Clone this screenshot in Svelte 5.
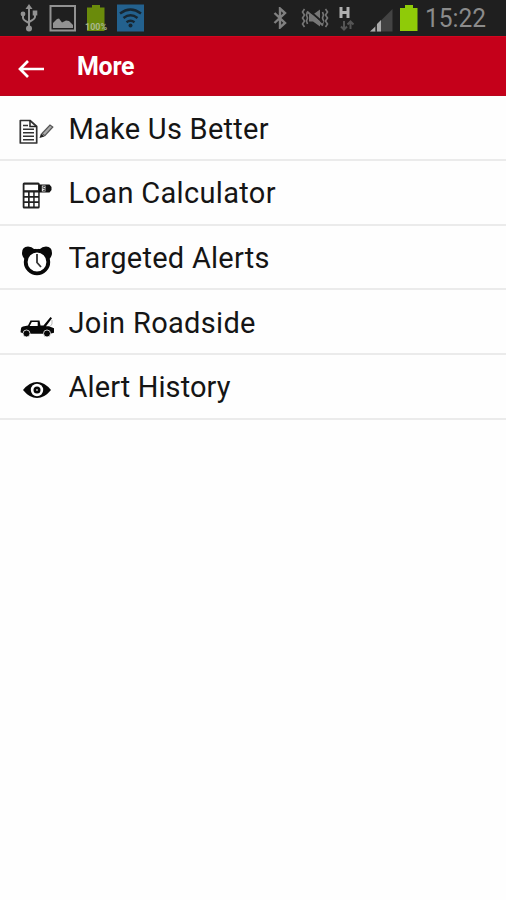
<script lang="ts">
    type MenuItem = {
        label: string;
        icon: string;
        width: number;
    };

    const time = "15:22";

    const items: MenuItem[] = [
        { label: "Make Us Better", icon: "feedback", width: 200 },
        { label: "Loan Calculator", icon: "calculator", width: 207 },
        { label: "Targeted Alerts", icon: "alarm", width: 201 },
        { label: "Join Roadside", icon: "truck", width: 187 },
        { label: "Alert History", icon: "eye", width: 162 }
    ];
</script>

<div class="screen">
    <div class="status-bar">
        <div class="status-group">
            <svg class="usb" width="18" height="28" viewBox="0 0 18 28">
                <g fill="none" stroke="#929292" stroke-width="2">
                    <path d="M9 4v20M3 10v4q0 2 6 5M15 9v4q0 2-6 5" />
                </g>
                <path d="M9 0l3.5 5h-7z" fill="#929292" />
                <circle cx="9" cy="24.5" r="3" fill="#929292" />
                <circle cx="3" cy="10" r="2.4" fill="#929292" />
                <path d="M12.7 6.5h4.6v5h-4.6z" fill="#929292" />
            </svg>
            <svg class="picture" width="27" height="28" viewBox="0 0 27 28">
                <path d="M1.500 2h24.500v24.500H1.500z" fill="none" stroke="#929292" stroke-width="2" />
                <path d="M4 24v-5l4-4 2-0.500 3 4 4-2 3 0.500 4 4v3z" fill="#929292" />
            </svg>
            <svg class="charge" width="24" height="28" viewBox="0 0 24 28">
                <path d="M8 1h8v2.500h4.500V27H3V3.500h5z" fill="#6a8b0b" />
                <text x="12" y="26" text-anchor="middle" textLength="22" lengthAdjust="spacingAndGlyphs">100%</text>
            </svg>
            <svg class="wifi" width="27" height="28" viewBox="0 0 27 28">
                <path d="M0 0.500h27v27H0z" fill="#23618e" />
                <g fill="none" stroke="#172733" stroke-width="2.500">
                    <path d="M3 9.500q10.500-8 21 0M6.500 14q7-5.500 14 0M9.500 18.300q4-3 8 0" />
                </g>
                <circle cx="13.500" cy="21.500" r="2" fill="#172733" />
            </svg>
        </div>
        <div class="status-group">
            <svg class="bluetooth" width="14" height="22" viewBox="0 0 14 22">
                <path d="M1.500 6l10.500 10-5 4.500v-19L12 6 1.500 16" fill="none" stroke="#808080" stroke-width="2.400" />
            </svg>
            <svg class="muted" width="28" height="20" viewBox="0 0 28 20">
                <g fill="none" stroke="#777" stroke-width="1.600">
                    <path d="M3.500 1l-2 3 2 3-2 3 2 3-2 3 2 3M6.500 4l-1 3 1 3-1 3 1 3M24.500 1l2 3-2 3 2 3-2 3 2 3-2 3M21.500 4l1 3-1 3 1 3-1 3" />
                </g>
                <path d="M8 6.500h4l7-5v17l-7-5H8z" fill="#777" />
                <path d="M7 1.500l15 13" stroke="#1f1f1f" stroke-width="2" />
                <path d="M6 3.500l16 14" stroke="#777" stroke-width="2" />
            </svg>
            <svg class="network" width="16" height="25" viewBox="0 0 16 25">
                <path d="M2 1v11M9 1v11M2 6.500H9" fill="none" stroke="#b0b0b0" stroke-width="3" />
                <path d="M5 15v8M2 20.500l3 3 3-3M11.500 23v-7M8.500 18.500l3-3 3 3" fill="none" stroke="#555" stroke-width="2" />
            </svg>
            <svg class="signal" width="24" height="23" viewBox="0 0 24 23">
                <path d="M22.500 0v22.500H0z" fill="#434343" />
                <path d="M0 22.500l5.500-5v5zM7 22.500v-7.500l4-4v11.500z" fill="#aaa" />
                <path d="M5.500 17.500l1.500-1.500v6.500H5.500z" fill="#2c2c2c" />
            </svg>
            <svg class="battery" width="18" height="26" viewBox="0 0 18 26">
                <path d="M5 0h8v3h4.500v23H0V3h5z" fill="#8fcb08" />
            </svg>
            <svg class="clock" width="66" height="36" viewBox="0 0 66 36">
                <text x="0" y="26.500" textLength="61" lengthAdjust="spacingAndGlyphs">{time}</text>
            </svg>
        </div>
    </div>

    <header class="app-bar">
        <button class="back" aria-label="Back">
            <svg width="28" height="20" viewBox="0 0 28 20">
                <path d="M26 10H2.500M10 2L2 10l8 8" fill="none" stroke="#fff" stroke-width="2.700" />
            </svg>
        </button>
        <h1 class="title">More</h1>
    </header>

    <ul class="menu">
        {#each items as item}
            <li class="menu-item">
                <svg class="menu-icon" width="38" height="40" viewBox="0 0 38 40">
                    {#if item.icon === "feedback"}
                        <path d="M2.300 12.500H12l6.700 6v16.500H2.300z" fill="#fff" stroke="#333" stroke-width="1.700" stroke-linejoin="round" />
                        <path d="M12 12.500V18.500h6.500" fill="none" stroke="#222" stroke-width="1.500" />
                        <path d="M5 17.500h5M5 21.200h11M5 24.700h11M5 28.200h11M5 31.700h11" stroke="#333" stroke-width="1.500" />
                        <path d="M24 25.500l8-8.500 2.800 2-8 8.700z" fill="#aaa" stroke="#555" stroke-width="1.200" />
                        <path d="M23 25.500l3.500 3-5 1.500z" fill="#222" />
                    {:else if item.icon === "calculator"}
                        <rect x="4.700" y="10.500" width="17" height="26" rx="1.500" fill="#222" />
                        <path d="M6.500 12.700h13.500v5.500H6.500z" fill="#fff" />
                        <path d="M6.500 20.500h3.500v3.500H6.500zM11.700 20.500h3.500v3.500h-3.500zM16.700 20.500h3.500v3.500h-3.500zM6.500 25.700h3.500v3.500H6.500zM11.700 25.700h3.500v3.500h-3.500zM16.700 25.700h3.500v3.500h-3.500zM6.500 31h3.500v3.500H6.500zM11.700 31h3.500v3.500h-3.500zM16.700 31h3.500v3.500h-3.500z" fill="#fff" />
                        <path d="M21 12.500h10.500l2 2.500v3l-2 2.500H21z" fill="#111" />
                        <path d="M23.800 13.500h3.700v6h-3.700z" fill="#ddd" />
                        <path d="M27 14.500h-2v2h2v2h-2" fill="none" stroke="#555" stroke-width="1" />
                    {:else if item.icon === "alarm"}
                        <path d="M4 16q0-6.500 6-6.500 4 0 6 2.500h6q2-2.500 6-2.500 6 0 6 6.500 0 3-2 5.500H6Q4 19 4 16z" fill="#080808" />
                        <circle cx="19" cy="25" r="11.300" fill="#fff" stroke="#080808" stroke-width="3.800" />
                        <path d="M15.500 10l3.500 2.200 3.500-2.200z" fill="#fefefe" />
                        <path d="M19 17v8.500l4 4.500" fill="none" stroke="#333" stroke-width="1.800" />
                    {:else if item.icon === "truck"}
                        <path d="M3 26.500q0-1.500 2-2l5-1 2.500-5h9l1 5h3l7-8.500 1.500 1.200-6 8H31l5 2v4.500l-4 1H6l-3.500-1.500z" fill="#080808" />
                        <path d="M13.800 19.900h5.900v4h-8z" fill="#fff" />
                        <path d="M34 18v4l-1.500 2" fill="none" stroke="#bbb" stroke-width="1" />
                        <circle cx="8.500" cy="31.500" r="3.500" fill="#080808" stroke="#fff" stroke-width="0.800" />
                        <circle cx="29" cy="31.500" r="3.500" fill="#080808" stroke="#fff" stroke-width="0.800" />
                    {:else}
                        <path d="M5 24q6.500-8 14-8t14 8q-6.500 8-14 8T5 24z" fill="#080808" />
                        <circle cx="19" cy="24" r="6.200" fill="#fff" />
                        <circle cx="19" cy="24" r="3.500" fill="#080808" />
                        <circle cx="19" cy="24" r="0.900" fill="#ccc" />
                    {/if}
                </svg>
                <svg class="label" width="220" height="44" viewBox="0 0 220 44">
                    <text x="-0.500" y="32.700" textLength={item.width} lengthAdjust="spacing">{item.label}</text>
                </svg>
            </li>
        {/each}
    </ul>
</div>

<style>
    :global(body) {
        background: #fefefe;
    }

    .screen {
        min-height: 900px;
        background: #fefefe;
        font-family: Roboto, sans-serif;
    }

    svg {
        display: block;
        flex-shrink: 0;
    }

    .status-bar {
        height: 36px;
        box-sizing: border-box;
        padding: 0 15px 0 20px;
        display: flex;
        justify-content: space-between;
        background: #1f1f1f;
    }

    .status-group {
        display: flex;
        align-items: center;
    }

    .picture {
        margin-left: 11px;
    }

    .charge {
        margin-left: 8px;
    }

    .charge text {
        font-size: 8.5px;
        font-weight: 700;
        fill: #a9b78c;
    }

    .wifi {
        margin-left: 9px;
    }

    .muted {
        margin-left: 14px;
    }

    .network {
        margin-left: 10px;
    }

    .signal {
        margin: 4px 0 0 15px;
    }

    .battery {
        margin-left: 6px;
    }

    .clock {
        margin-left: 7px;
    }

    .clock text {
        font-size: 26px;
        fill: #8b8b8b;
    }

    .app-bar {
        height: 60px;
        box-sizing: border-box;
        display: flex;
        align-items: center;
        padding-left: 18px;
        background: #c5001a;
        border-top: 1px solid #d4061f;
        border-bottom: 1px solid #b9061d;
    }

    .back {
        padding: 5px 0 0;
        border: 0;
        background: none;
    }

    .title {
        margin: 0 0 0 31px;
        color: #fff;
        font-size: 25px;
        font-weight: 700;
        letter-spacing: -0.3px;
    }

    .menu {
        margin: 0;
        padding: 0.4px 0 0;
        list-style: none;
    }

    .menu-item {
        height: 64.7px;
        box-sizing: border-box;
        display: flex;
        align-items: center;
        gap: 13px;
        padding-left: 18px;
        border-bottom: 2px solid #ebebeb;
    }

    .label text {
        font-size: 29px;
        fill: #151515;
    }
</style>
